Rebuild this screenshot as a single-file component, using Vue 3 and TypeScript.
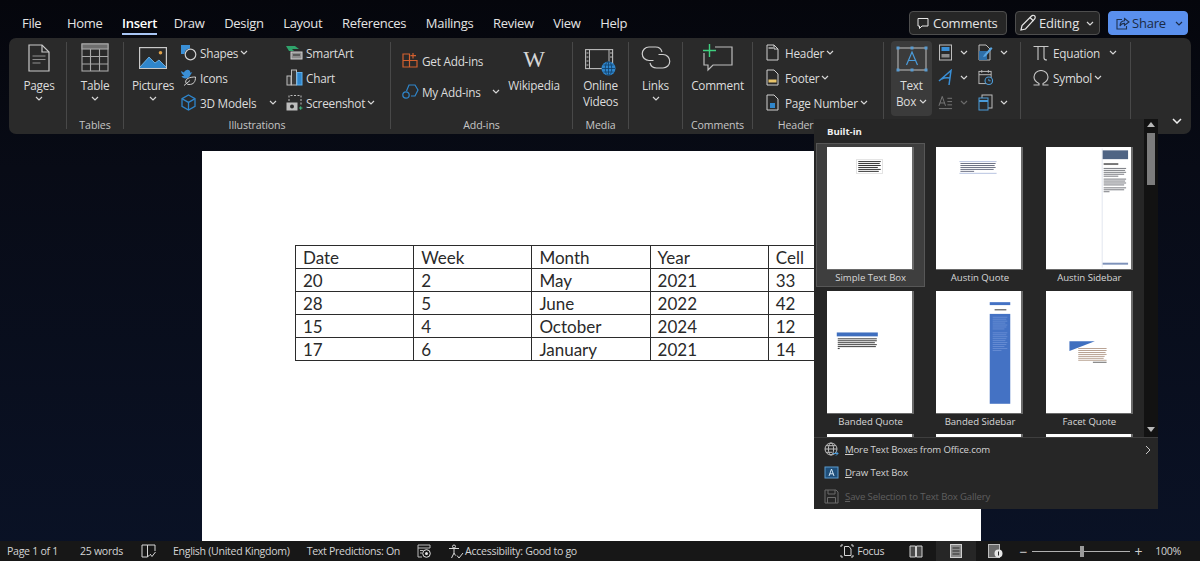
<script setup lang="ts">
interface Bar {
  x: number
  y: number
  w: number
  h: number
  fill: string
}

interface GalleryItem {
  name: string
  bars: Bar[]
  shape?: string
}

// Tiny placeholder lines inside the gallery previews
const lines = (x: number, y: number, widths: number[], fill: string, h = 1, step = 2): Bar[] =>
  widths.map((w, i) => ({ x, y: y + i * step, w, h, fill }))

const dark = '#55585f'

const gallery: GalleryItem[] = [
  {
    name: 'Simple Text Box',
    bars: [
      { x: 30, y: 11, w: 27, h: 15, fill: '#cfcfcf' },
      { x: 30.5, y: 11.5, w: 26, h: 14, fill: '#ffffff' },
      ...lines(32, 13, [23, 22, 23, 20, 23, 21], '#333333', 1),
    ],
  },
  {
    name: 'Austin Quote',
    bars: [
      { x: 24, y: 13, w: 38, h: 1, fill: '#b7c3e0' },
      { x: 24, y: 25, w: 38, h: 1, fill: '#b7c3e0' },
      ...lines(25, 15, [36, 35, 36, 34, 14], '#5a6075', 0.9),
    ],
  },
  {
    name: 'Austin Sidebar',
    bars: [
      { x: 57, y: 0, w: 1, h: 122, fill: '#e2e6ef' },
      { x: 58, y: 2, w: 26, h: 9, fill: '#4f6484' },
      { x: 59, y: 15, w: 15, h: 2, fill: '#777777' },
      ...lines(59, 20, [23, 22, 23, 21, 15], dark, 0.8),
      ...lines(59, 31, [23, 22, 23, 21], dark, 0.8),
      ...lines(59, 40, [23, 21, 6], dark, 0.8),
      { x: 58, y: 117, w: 26, h: 2, fill: '#7e92ba' },
    ],
  },
  {
    name: 'Banded Quote',
    bars: [
      { x: 10, y: 41, w: 42, h: 4, fill: '#3f6fbf' },
      ...lines(11, 47, [40, 40, 38, 40, 39, 2], '#3a3a3a', 1),
    ],
  },
  {
    name: 'Banded Sidebar',
    bars: [
      { x: 55, y: 10, w: 21, h: 3, fill: '#4472c4' },
      { x: 60, y: 17, w: 12, h: 1.5, fill: '#777777' },
      { x: 55, y: 22, w: 21, h: 92, fill: '#4472c4' },
      ...lines(58, 25, [15, 14, 15, 13, 15, 14, 12, 0, 15, 14, 15, 14, 13, 15, 14, 12, 15, 9], '#6d91d6', 0.8),
    ],
  },
  {
    name: 'Facet Quote',
    shape: '24,50 50,50 24,60',
    bars: [
      ...lines(33, 57, [29, 29, 28, 29, 27, 26, 29], '#a68a76', 0.8),
      { x: 48, y: 71, w: 14, h: 1, fill: '#666666' },
    ],
  },
  { name: '', bars: [] },
  { name: '', bars: [] },
  { name: '', bars: [] },
]

const tabs = ['Home', 'Insert', 'Draw', 'Design', 'Layout', 'References', 'Mailings', 'Review', 'View', 'Help']

const tableRows = [
  ['Date', 'Week', 'Month', 'Year', 'Cell'],
  ['20', '2', 'May', '2021', '33'],
  ['28', '5', 'June', '2022', '42'],
  ['15', '4', 'October', '2024', '12'],
  ['17', '6', 'January', '2021', '14'],
]
</script>

<template>
  <div class="word">
    <svg class="defs" aria-hidden="true">
      <symbol id="chev" viewBox="0 0 8 5">
        <polyline points="1,1 4,4 7,1" fill="none" stroke="currentColor" stroke-width="1.2" />
      </symbol>
    </svg>

    <header class="topbar">
      <nav class="tabs">
        <span class="tab file">File</span>
        <span v-for="t in tabs" :key="t" class="tab" :class="{ active: t === 'Insert' }">{{ t }}</span>
      </nav>
      <div class="actions">
        <button class="btn comments">
          <svg width="12" height="13" viewBox="0 0 12 13" fill="none" stroke="#e6e6e6"><path d="M1 1.500h10v7.500H5L2.500 11.500V9H1z" /></svg>
          Comments
        </button>
        <button class="btn editing">
          <svg width="18" height="18" viewBox="0 0 18 18" fill="none" stroke="#e6e6e6" stroke-width="1.2"><path d="M2 16l1-4.500L12.500 2a1.800 1.800 0 0 1 3.200 2.800L6.500 15z" /><path d="M11 3.500l3.500 3.500" /></svg>
          Editing
          <svg class="chev"><use href="#chev" /></svg>
        </button>
        <button class="btn share">
          <span class="share-main">
            <svg width="14" height="13" viewBox="0 0 14 13" fill="none" stroke="#20324f" stroke-width="1.1"><path d="M6 2.500H1v9.500h9.500V9" /><path d="M8.500 1.500l4.500 3.500-4.500 3.300V6.400C6 6.400 4.800 7.400 4 9c0-3 1.700-5 4.500-5.200z" /></svg>
            Share
          </span>
          <svg class="chev dark"><use href="#chev" /></svg>
        </button>
      </div>
    </header>

    <section class="ribbon">
      <div class="grp w57">
        <div class="grp-body center pages">
          <div class="big">
            <span class="big-ico">
              <svg width="22" height="28" viewBox="0 0 22 28" fill="none" stroke="#c9c9c9" stroke-width="1.2"><path d="M1 1h13l7 7v19H1z" /><path d="M14 1v7h7" /><path d="M4.500 12h13M4.500 15.500h13M4.500 19h8" stroke="#8f8f8f" /></svg>
            </span>
            <span>Pages</span>
            <svg class="chev"><use href="#chev" /></svg>
          </div>
        </div>
      </div>
      <i class="sep" />

      <div class="grp w56">
        <div class="grp-body center">
          <div class="big">
            <span class="big-ico">
              <svg width="28" height="29" viewBox="0 0 28 29" fill="none" stroke="#a8a8a8" stroke-width="1.1"><rect x="1" y="1" width="26" height="27" /><rect x="1" y="1" width="26" height="5" fill="#6e6e6e" /><path d="M1 13.500h26M1 21h26M9.500 6v22M18.500 6v22" /></svg>
            </span>
            <span>Table</span>
            <svg class="chev"><use href="#chev" /></svg>
          </div>
        </div>
        <div class="grp-label">Tables</div>
      </div>
      <i class="sep" />

      <div class="grp w266">
        <div class="grp-body illus">
          <div class="big pictures">
            <span class="big-ico">
              <svg width="28" height="22" viewBox="0 0 28 22" fill="none"><rect x="0.600" y="0.600" width="26.800" height="20.800" stroke="#c9c9c9" stroke-width="1.2" /><path d="M1 20l9-10 6 6 4-3 7 7v1H1z" fill="#2f86cc" /><path d="M1 20l9-10 6 6 4-3 7 7" stroke="#7fc0ef" stroke-width="0.800" /><circle cx="21.500" cy="5.800" r="1.800" fill="#e0a24a" /></svg>
            </span>
            <span>Pictures</span>
            <svg class="chev"><use href="#chev" /></svg>
          </div>
          <div class="col col-shapes">
            <div class="row">
              <svg class="ico" viewBox="0 0 17 17" fill="none"><path d="M1 1h9v3.500A6 6 0 0 0 4.500 10H1z" fill="#3a8fd6" /><circle cx="10.500" cy="10.500" r="5.300" stroke="#cfcfcf" stroke-width="1.200" /></svg>
              <span>Shapes</span>
              <svg class="chev"><use href="#chev" /></svg>
            </div>
            <div class="row">
              <svg class="ico" viewBox="0 0 17 17" fill="none"><path d="M1 2l3 1.500C5 1 8 0 9.500 1.500c.7.700.8 1.500.8 2.300l2-.5-1.500 2C10 8 8 9.500 5.500 9.500 3.500 9.500 2 8.500 1.500 7c1.500.3 2 0 2.500-.500C2.500 6 1.300 4 1 2z" fill="#3a8fd6" /><path d="M15.500 8c0 5-2 7.500-6.500 7.500-1.500 0-3-.8-3.300-2.500C5.400 10 9 8 15.500 8zM4 16.500l6-5" stroke="#cfcfcf" /></svg>
              <span>Icons</span>
            </div>
            <div class="row">
              <svg class="ico" viewBox="0 0 17 17" fill="none" stroke="#2f86cc" stroke-width="1.300"><path d="M8.500 1l6.500 3.700v7.600L8.500 16 2 12.300V4.700z" /><path d="M2.300 4.900l6.200 3.500 6.200-3.500M8.500 8.400V16" /></svg>
              <span>3D Models</span>
              <svg class="chev push"><use href="#chev" /></svg>
            </div>
          </div>
          <div class="col">
            <div class="row">
              <svg class="ico" viewBox="0 0 17 17" fill="none"><path d="M0 2h9l4 3H6l2 2H3z" fill="#2fa36b" /><rect x="5" y="8" width="11" height="7" fill="#8c8c8c" stroke="#d0d0d0" /><path d="M7 11h7" stroke="#2b2b2b" /></svg>
              <span>SmartArt</span>
            </div>
            <div class="row">
              <svg class="ico" viewBox="0 0 17 17" fill="none"><rect x="1" y="7" width="4" height="9" fill="#3a3a3a" stroke="#bdbdbd" /><rect x="5.500" y="1" width="5" height="15" fill="#3a3a3a" stroke="#bdbdbd" /><rect x="11" y="3.500" width="5" height="12.500" fill="#2f86cc" stroke="#5fb0ec" /></svg>
              <span>Chart</span>
            </div>
            <div class="row">
              <svg class="ico" viewBox="0 0 17 17" fill="none" stroke="#bdbdbd"><path d="M3 7V1.500h12V11" stroke-dasharray="2 1.500" /><rect x="1" y="9" width="10" height="7" fill="#bdbdbd" /><circle cx="6" cy="12.500" r="2" fill="#2b2b2b" stroke="none" /><path d="M13 14h3.500M14.700 12.300v3.500" stroke="#3fbf7f" /></svg>
              <span>Screenshot</span>
              <svg class="chev"><use href="#chev" /></svg>
            </div>
          </div>
        </div>
        <div class="grp-label">Illustrations</div>
      </div>
      <i class="sep" />

      <div class="grp w181">
        <div class="grp-body addins">
          <div class="col col-addins">
            <div class="row tall">
              <svg class="ico" viewBox="0 0 17 17" fill="none" stroke="#d2602f" stroke-width="1.200"><path d="M1 2h6.500v13H1zM1 8.500h14V15H7.500M11 1v5.500M8.500 3.700h5.500" /></svg>
              <span>Get Add-ins</span>
            </div>
            <div class="row tall">
              <svg class="ico" viewBox="0 0 17 17" fill="none" stroke="#2f86cc" stroke-width="1.200"><path d="M4.500 8l2.500-6h6l3 5-3 6H9" /><circle cx="4" cy="12" r="3.200" /></svg>
              <span>My Add-ins</span>
              <svg class="chev push"><use href="#chev" /></svg>
            </div>
          </div>
          <div class="big wiki">
            <span class="big-ico w-glyph">W</span>
            <span>Wikipedia</span>
          </div>
        </div>
        <div class="grp-label">Add-ins</div>
      </div>
      <i class="sep" />

      <div class="grp w55">
        <div class="grp-body center">
          <div class="big">
            <span class="big-ico">
              <svg class="low" width="31" height="27" viewBox="0 0 31 27" fill="none"><rect x="0.600" y="0.600" width="27" height="19" stroke="#bdbdbd" stroke-width="1.100" /><path d="M4.500 1v19M24 1v19" stroke="#bdbdbd" /><path d="M1.500 4h2M1.500 8h2M1.500 12h2M1.500 16h2M25 4h2M25 8h2" stroke="#bdbdbd" /><circle cx="23.500" cy="19.500" r="7" fill="#2f86cc" /><path d="M17 19.500h13M23.500 13v13M18.500 16h10M18.500 23h10" stroke="#123e66" stroke-width="0.800" /><ellipse cx="23.500" cy="19.500" rx="3.200" ry="7" stroke="#123e66" stroke-width="0.800" /></svg>
            </span>
            <span>Online</span>
            <span>Videos</span>
          </div>
        </div>
        <div class="grp-label">Media</div>
      </div>
      <i class="sep" />

      <div class="grp w53">
        <div class="grp-body center">
          <div class="big">
            <span class="big-ico">
              <svg width="30" height="23" viewBox="0 0 30 23" fill="none" stroke="#cfcfcf" stroke-width="1.200"><path d="M12.500 14.500H8a6.700 6.700 0 1 1 0-13.500h6.500a6.700 6.700 0 0 1 6.500 5" /><path d="M17.500 8.500H22a6.700 6.700 0 1 1 0 13.500h-6.500a6.700 6.700 0 0 1-6.500-5" /></svg>
            </span>
            <span>Links</span>
            <svg class="chev"><use href="#chev" /></svg>
          </div>
        </div>
      </div>
      <i class="sep" />

      <div class="grp w69">
        <div class="grp-body center">
          <div class="big">
            <span class="big-ico">
              <svg width="31" height="28" viewBox="0 0 31 28" fill="none"><path d="M13 3h17v18H11l-5 5v-5H2V9" stroke="#bdbdbd" stroke-width="1.200" /><path d="M7.500 0v13M1 6.500h13" stroke="#3fd07f" stroke-width="1.400" /></svg>
            </span>
            <span>Comment</span>
          </div>
        </div>
        <div class="grp-label">Comments</div>
      </div>
      <i class="sep" />

      <div class="grp w130">
        <div class="grp-body col header-col">
          <div class="row">
            <svg class="ico doc" viewBox="0 0 13 17" fill="none" stroke="#cfcfcf"><path d="M1 1h7l4 4v11H1z" /><path d="M8 1v4h4" /><rect x="2.500" y="3" width="5" height="2" fill="#8f8f8f" stroke="none" /></svg>
            <span>Header</span>
            <svg class="chev"><use href="#chev" /></svg>
          </div>
          <div class="row">
            <svg class="ico doc" viewBox="0 0 13 17" fill="none" stroke="#cfcfcf"><path d="M1 1h7l4 4v11H1z" /><rect x="2.500" y="10.500" width="8" height="3" fill="#e8c46a" stroke="none" /></svg>
            <span>Footer</span>
            <svg class="chev"><use href="#chev" /></svg>
          </div>
          <div class="row">
            <svg class="ico doc" viewBox="0 0 13 17" fill="none" stroke="#cfcfcf"><path d="M1 1h7l4 4v11H1z" /><rect x="4" y="9" width="5" height="5" fill="#2f86cc" stroke="none" /></svg>
            <span>Page Number</span>
            <svg class="chev"><use href="#chev" /></svg>
          </div>
        </div>
        <div class="grp-label">Header &amp; Footer</div>
      </div>
      <i class="sep" />

      <div class="grp w136">
        <div class="grp-body text-grp">
          <div class="big textbox">
            <span class="big-ico">
              <svg width="32" height="26" viewBox="0 0 32 26" fill="none"><rect x="2" y="2" width="28" height="22" stroke="#b5b5b5" stroke-width="1.100" /><path d="M2 2h0M30 2h0M2 24h0M30 24h0M16 2h0M16 24h0" stroke="#5a9bd0" stroke-width="3" stroke-linecap="square" /><path d="M10.500 19L16 6l5.500 13M12.500 14.500h7" stroke="#4a9bd9" stroke-width="1.200" /></svg>
            </span>
            <span>Text</span>
            <span class="inline">Box <svg class="chev"><use href="#chev" /></svg></span>
          </div>
          <div class="col col-icons">
            <div class="row">
              <svg class="ico" viewBox="0 0 14 17" fill="none"><rect x="1" y="1" width="12" height="15" stroke="#bdbdbd" /><rect x="3" y="3" width="8" height="4" fill="#3a8fd6" /><rect x="3" y="10" width="8" height="3.500" fill="#8c8c8c" /></svg>
              <svg class="chev"><use href="#chev" /></svg>
            </div>
            <div class="row">
              <svg class="ico" viewBox="0 0 14 17" fill="none" stroke="#3a8fd6" stroke-width="1.500"><path d="M0.500 12L12.500 1.500 10.500 16M3 10c3-1.500 5-1.500 8.500-1" /></svg>
              <svg class="chev"><use href="#chev" /></svg>
            </div>
            <div class="row muted">
              <svg class="ico" viewBox="0 0 16 17" fill="none" stroke="#7a7a7a"><path d="M1 12L4.500 2 8 12M2 9h5M10 4h5M10 7.500h5M10 11h5M1 15h14" /></svg>
              <svg class="chev"><use href="#chev" /></svg>
            </div>
          </div>
          <div class="col col-icons">
            <div class="row">
              <svg class="ico" viewBox="0 0 15 17" fill="none"><path d="M1 1h7l4 4v11H1z" stroke="#bdbdbd" /><path d="M1 7h8v9H1z" fill="#2f6fa8" /><path d="M6 11l7-8 1.500 1.500-7 8L5 13z" fill="#5aa5e0" /></svg>
              <svg class="chev"><use href="#chev" /></svg>
            </div>
            <div class="row">
              <svg class="ico" viewBox="0 0 16 17" fill="none" stroke="#bdbdbd"><rect x="1" y="2" width="13" height="13" /><path d="M1 5.500h13M4 0.500v3M11 0.500v3" /><circle cx="11.500" cy="12" r="4" fill="#2b2b2b" stroke="#4a9bd9" stroke-width="1.200" /><path d="M11.500 10v2h2" stroke="#4a9bd9" /></svg>
            </div>
            <div class="row">
              <svg class="ico" viewBox="0 0 15 17" fill="none"><rect x="4" y="1" width="10" height="13" stroke="#bdbdbd" /><rect x="1" y="4" width="9" height="12" fill="#2b2b2b" stroke="#4a9bd9" /><path d="M1 7h9" stroke="#4a9bd9" stroke-width="2" /></svg>
              <svg class="chev"><use href="#chev" /></svg>
            </div>
          </div>
        </div>
      </div>
      <i class="sep" />

      <div class="grp w109">
        <div class="grp-body col symbols">
          <div class="row">
            <svg class="sym" width="16" height="16" viewBox="0 0 16 16" fill="none" stroke="#c8c8c8" stroke-width="1.100"><path d="M0.500 1.500h15M5 1.500V15M11 1.500v11.500c0 1.500.8 2 3 2" /></svg>
            <span>Equation</span>
            <svg class="chev push"><use href="#chev" /></svg>
          </div>
          <div class="row">
            <svg class="sym" width="16" height="16" viewBox="0 0 16 16" fill="none" stroke="#c8c8c8" stroke-width="1.100"><path d="M0.500 15H6v-1.500C3 12 1 9.500 1 7a7 6.500 0 0 1 14 0c0 2.500-2 5-5 6.500V15h5.500" /></svg>
            <span>Symbol</span>
            <svg class="chev"><use href="#chev" /></svg>
          </div>
        </div>
      </div>
      <i class="sep" />

      <div class="collapse">
        <svg width="10" height="6" viewBox="0 0 10 6" fill="none" stroke="#f0f0f0" stroke-width="1.500"><polyline points="1,1 5,5 9,1" /></svg>
      </div>
    </section>

    <main class="canvas">
      <article class="page">
        <table class="doc-table">
          <tbody>
            <tr v-for="(r, i) in tableRows" :key="i">
              <td v-for="c in r" :key="c">{{ c }}</td>
            </tr>
          </tbody>
        </table>
      </article>
    </main>

    <footer class="status">
      <div class="st-left">
        <span class="st-page">Page 1 of 1</span>
        <span class="st-words">25 words</span>
        <svg class="st-book" width="15" height="14" viewBox="0 0 15 14" fill="none" stroke="#d8d8d8"><path d="M1 1h5.500v12H1zM6.500 1H14v6M6.500 13l2-2" /><path d="M9 10l2 2.500L14.500 8" /></svg>
        <span class="st-lang">English (United Kingdom)</span>
        <span class="st-pred">Text Predictions: On</span>
        <svg class="st-track" width="14" height="14" viewBox="0 0 14 14" fill="none" stroke="#bdbdbd"><path d="M1 1h12v3H1zM1 4v9h4" /><path d="M3 6.500h3M3 9h2" /><circle cx="9.500" cy="9.500" r="3.800" stroke="#e6e6e6" /><circle cx="9.500" cy="9.500" r="1.500" fill="#e6e6e6" stroke="none" /></svg>
        <svg class="st-access" width="16" height="15" viewBox="0 0 16 15" fill="none" stroke="#d8d8d8"><circle cx="6" cy="2.500" r="1.500" /><path d="M1 4.500h10M6 5v4M6 9l-2.500 5M6 9l1.500 2.500" /><path d="M9 11.500l2 2.500 4-5" /></svg>
        <span class="st-a11y">Accessibility: Good to go</span>
      </div>
      <div class="st-right">
        <svg width="14" height="14" viewBox="0 0 14 14" fill="none" stroke="#d8d8d8"><path d="M1 3V1h2M11 1h2v2M1 11v2h2M13 11v2h-2" /><path d="M4.500 2.500H9l2 2.500v6.500H4.500z" /></svg>
        <span class="st-focus">Focus</span>
        <svg class="st-read" width="14" height="13" viewBox="0 0 14 13" fill="#4a4a4a" stroke="#d0d0d0"><path d="M1 1h5.500v11H1zM7.500 1H13v11H7.500z" /></svg>
        <span class="st-print">
          <svg width="12" height="14" viewBox="0 0 12 14" fill="#8a8a8a" stroke="#d0d0d0"><rect x="0.500" y="0.500" width="11" height="13" /><path d="M2.500 4h7M2.500 7h7M2.500 10h7" stroke="#2a2a2a" /></svg>
        </span>
        <svg class="st-web" width="15" height="14" viewBox="0 0 15 14" fill="none" stroke="#bdbdbd"><rect x="0.500" y="0.500" width="11" height="13" fill="#6b6b6b" /><circle cx="10.500" cy="9.500" r="4" fill="#e6e6e6" stroke="none" /><path d="M10.500 7.500v4" stroke="#222" /></svg>
        <span class="st-zoom">
          <span class="zoom-sign">−</span>
          <span class="zoom-track"><span class="zoom-thumb" /></span>
          <span class="zoom-sign">+</span>
        </span>
        <span class="st-pct">100%</span>
      </div>
    </footer>

    <!-- Text Box dropdown, opened over the ribbon and the page -->
    <aside class="menu">
      <div class="menu-top">
        <div class="menu-gallery">
          <div class="menu-title">Built-in</div>
          <div class="thumbs">
            <div
              v-for="(item, i) in gallery"
              :key="i"
              class="thumb-item"
              :class="{ selected: i === 0 }"
            >
              <svg class="thumb" viewBox="0 0 87 122">
                <polygon v-if="item.shape" :points="item.shape" fill="#3f6fbf" />
                <rect
                  v-for="(b, j) in item.bars"
                  :key="j"
                  :x="b.x"
                  :y="b.y"
                  :width="b.w"
                  :height="b.h"
                  :fill="b.fill"
                />
              </svg>
              <span class="thumb-name">{{ item.name }}</span>
            </div>
          </div>
        </div>
        <div class="scroll">
          <span class="tri up" />
          <span class="scroll-thumb" />
          <span class="tri down" />
        </div>
      </div>
      <div class="menu-rows">
        <div class="menu-row">
          <svg width="15" height="15" viewBox="0 0 15 15" fill="none" stroke="#bdbdbd"><circle cx="7" cy="7" r="6" /><ellipse cx="7" cy="7" rx="2.600" ry="6" /><path d="M1 7h12M2 3.700h10M2 10.300h6" /><path d="M9 11.500h5M12 9.500l2 2-2 2" stroke="#4a9bd9" /></svg>
          <span><u>M</u>ore Text Boxes from Office.com</span>
          <svg class="caret" width="6" height="10" viewBox="0 0 6 10" fill="none" stroke="#c8c8c8"><polyline points="1,1 5,5 1,9" /></svg>
        </div>
        <div class="menu-row">
          <svg width="15" height="15" viewBox="0 0 15 15" fill="none"><rect x="1" y="2" width="13" height="11" fill="#1f4f7a" stroke="#5a9bd0" /><path d="M5 11l2.500-7L10 11M5.800 8.800h3.400" stroke="#cfe4f5" /></svg>
          <span><u>D</u>raw Text Box</span>
        </div>
        <div class="menu-row disabled">
          <svg width="15" height="15" viewBox="0 0 15 15" fill="none" stroke="#6a6a6a"><path d="M1 1h11l2 2v11H1z" /><path d="M4 1v4h7V1M3.500 14V8.500h8V14" /></svg>
          <span><u>S</u>ave Selection to Text Box Gallery</span>
        </div>
      </div>
    </aside>
  </div>
</template>

<style>
html,
body {
  margin: 0;
  background: #0a0f1e;
}
</style>

<style scoped>
.word {
  position: relative;
  width: 1200px;
  height: 561px;
  overflow: hidden;
  display: flex;
  flex-direction: column;
  background: linear-gradient(180deg, #05060c 0%, #080b16 30%, #0a1226 100%);
  font-family: 'Open Sans', 'Noto Sans', sans-serif;
  color: #e2e2e2;
}

.defs {
  display: none;
}

.chev {
  width: 8px;
  height: 5px;
  flex: none;
  color: #d6d6d6;
}

.chev.dark {
  color: #1c2c48;
}

/* top bar */
.topbar {
  height: 38px;
  flex: none;
  display: flex;
  justify-content: space-between;
}

.tabs {
  display: flex;
  gap: 19.6px;
  padding: 14px 0 0 22px;
  font-size: 13px;
  letter-spacing: -0.3px;
  color: #e4e4e4;
}

.tab {
  height: 19px;
  line-height: 19px;
}

.tab.file {
  margin-right: 6px;
}

.tab.active {
  margin-right: -3px;
  font-weight: 600;
  color: #fff;
  border-bottom: 2px solid #a9c6f5;
  box-sizing: border-box;
  height: 21px;
}

.actions {
  display: flex;
  gap: 8px;
  padding: 11px 12px 0 0;
}

.btn {
  height: 24px;
  box-sizing: border-box;
  display: flex;
  align-items: center;
  border: 1px solid #4e4e4e;
  border-radius: 4px;
  background: #262626;
  color: #e4e4e4;
  font: inherit;
  font-size: 13px;
  letter-spacing: -0.2px;
  padding: 0;
}

.comments {
  width: 98px;
  padding-left: 7px;
  gap: 4px;
}

.editing {
  width: 85px;
  padding-left: 3px;
  gap: 2px;
}

.editing .chev {
  margin-left: 5px;
}

.share {
  width: 80px;
  background: #5a90ee;
  border-color: #5a90ee;
  color: #1b2a44;
  padding-left: 7px;
}

.share-main {
  display: flex;
  align-items: center;
  gap: 2px;
}

.share .chev {
  margin-left: 9px;
}

/* ribbon */
.ribbon {
  height: 96px;
  flex: none;
  margin: 0 9px;
  box-sizing: border-box;
  display: flex;
  background: #2a2a2a;
  border-radius: 7px;
  font-size: 11.8px;
  letter-spacing: -0.25px;
  color: #dcdcdc;
}

.sep {
  width: 1px;
  flex: none;
  height: 87px;
  margin-top: 4px;
  background: #484848;
}

.grp {
  flex: none;
  display: flex;
  flex-direction: column;
}

.w57 { width: 57px; }
.w56 { width: 56px; }
.w266 { width: 266px; }
.w181 { width: 181px; }
.w55 { width: 55px; }
.w53 { width: 53px; }
.w69 { width: 69px; }
.w130 { width: 130px; }
.w136 { width: 136px; }
.w109 { width: 109px; }

.grp-body {
  height: 78px;
  display: flex;
}

.grp-body.center {
  justify-content: center;
}

.grp-body.pages {
  padding-left: 3px;
}

.grp-label {
  height: 18px;
  line-height: 18px;
  text-align: center;
  font-size: 10.6px;
  letter-spacing: -0.1px;
  color: #c6c6c6;
  white-space: nowrap;
}

.big {
  display: flex;
  flex-direction: column;
  align-items: center;
  line-height: 16px;
  white-space: nowrap;
}

.big .chev {
  margin-top: 3px;
}

.big-ico {
  height: 39px;
  display: flex;
  align-items: center;
  justify-content: center;
  flex: none;
}

.low {
  margin-top: 10px;
}

.col {
  display: flex;
  flex-direction: column;
  padding-top: 2px;
}

.row {
  height: 25px;
  display: flex;
  align-items: center;
  gap: 3px;
  white-space: nowrap;
}

.row.tall {
  height: 31px;
}

.row .chev {
  margin-left: -1px;
}

.ico {
  width: 17px;
  height: 17px;
  flex: none;
}

.ico.doc {
  width: 13px;
}

.illus .pictures {
  width: 40px;
  margin-left: 9px;
}

.col-shapes {
  width: 106px;
  margin-left: 7px;
}

.row .push {
  margin-left: auto;
}

.col-shapes .push {
  margin-right: 9px;
}

.addins {
  padding-left: 11px;
}

.col-addins {
  width: 98px;
  padding-top: 7px;
}

.wiki {
  width: 52px;
  padding-left: 8px;
}

.w-glyph {
  font-family: 'Liberation Serif', serif;
  font-size: 23px;
  color: #d6d6d6;
  padding-top: 5px;
  box-sizing: border-box;
}

.header-col {
  padding-left: 13px;
}

.header-col .row {
  gap: 6px;
}

.header-col .chev {
  margin-left: -4px;
}

.text-grp {
  padding-left: 7px;
}

.textbox {
  width: 41px;
  height: 75px;
  margin-top: 3px;
  background: #3b3b3b;
  border-radius: 4px;
}

.textbox .big-ico {
  height: 36px;
}

.inline {
  display: flex;
  align-items: center;
  gap: 3px;
}

.inline .chev {
  margin-top: 0;
}

.col-icons {
  width: 40px;
  margin-left: 6px;
}

.text-grp .col-icons:last-child {
  margin-left: 0;
}

.col-icons .ico {
  width: 15px;
}

.col-icons .chev {
  margin-left: 4px;
}

.muted .chev {
  color: #6a6a6a;
}

.symbols {
  padding: 2px 13px 0 12px;
  box-sizing: border-box;
}

.sym {
  flex: none;
  margin-right: 1px;
}

.collapse {
  flex: 1;
  display: flex;
  align-items: flex-end;
  justify-content: flex-end;
  padding: 0 9px 10px 0;
}

/* document */
.canvas {
  flex: 1;
  min-height: 0;
  padding: 17px 0 0 202px;
  overflow: hidden;
}

.page {
  width: 779px;
  height: 390px;
  box-sizing: border-box;
  padding: 94px 0 0 93px;
  background: #fff;
}

.doc-table {
  width: 592px;
  table-layout: fixed;
  border-collapse: collapse;
  font-family: Lato, 'Open Sans', sans-serif;
  font-size: 17px;
  color: #2a2a2a;
}

.doc-table td {
  height: 23px;
  padding: 1px 0 0 7px;
  box-sizing: border-box;
  border: 1px solid #2b2b2b;
  line-height: 20px;
}

/* status bar */
.status {
  height: 20px;
  flex: none;
  display: flex;
  justify-content: space-between;
  background: #171717;
  font-size: 10.6px;
  letter-spacing: -0.3px;
  color: #d4d4d4;
}

.st-left,
.st-right {
  display: flex;
  align-items: center;
  white-space: nowrap;
}

.st-page { margin-left: 7px; }
.st-words { margin-left: 22px; }
.st-book { margin-left: 18px; }
.st-lang { margin-left: 17px; }
.st-pred { margin-left: 17px; }
.st-track { margin-left: 17px; }
.st-access { margin-left: 17px; }
.st-a11y { margin-left: 1px; }
.st-focus { margin-left: 3px; }
.st-read { margin-left: 25px; }

.st-print {
  width: 40px;
  height: 20px;
  margin-left: 13px;
  display: flex;
  align-items: center;
  justify-content: center;
  background: #262626;
}

.st-web { margin-left: 12px; }

.st-zoom {
  display: flex;
  align-items: center;
  margin-left: 14px;
}

.zoom-sign {
  width: 12px;
  text-align: center;
  font-size: 14px;
  color: #cfcfcf;
}

.zoom-track {
  width: 98px;
  height: 1px;
  margin: 0 2px 0 3px;
  background: #b0b0b0;
  display: flex;
  align-items: center;
  padding-left: 48px;
  box-sizing: border-box;
}

.zoom-thumb {
  width: 4px;
  height: 11px;
  background: #9a9a9a;
}

.st-pct {
  margin: 0 19px 0 11px;
}

/* dropdown */
.menu {
  position: absolute;
  left: 814px;
  top: 119px;
  width: 344px;
  height: 390px;
  display: flex;
  flex-direction: column;
  background: #262626;
  font-size: 9.6px;
  letter-spacing: -0.03px;
  color: #d6d6d6;
}

.menu-top {
  height: 318px;
  flex: none;
  display: flex;
}

.menu-gallery {
  width: 330px;
  overflow: hidden;
  flex: none;
  box-sizing: border-box;
  padding-left: 2px;
}

.menu-title {
  height: 24px;
  line-height: 26px;
  padding-left: 11px;
  font-weight: 700;
  font-size: 9.6px;
  color: #f0f0f0;
}

.thumbs {
  display: grid;
  grid-template-columns: repeat(3, 1fr);
  grid-auto-rows: 143.5px;
}

.thumb-item {
  box-sizing: border-box;
  display: flex;
  flex-direction: column;
  align-items: center;
  padding-top: 3px;
  border: 1px solid transparent;
  height: 144px;
}

.thumb-item.selected {
  background: #3e3e3e;
  border-color: #575757;
}

.thumb {
  width: 87px;
  height: 123px;
  flex: none;
  background: #fff;
  border-right: 2px solid #6a6a6a;
  border-bottom: 1px solid #6a6a6a;
  box-sizing: border-box;
}

.thumb-name {
  line-height: 16px;
  white-space: nowrap;
}

.scroll {
  width: 14px;
  flex: none;
  background: #121212;
  display: flex;
  flex-direction: column;
  align-items: center;
  padding: 3px 0 5px;
  box-sizing: border-box;
}

.tri {
  width: 0;
  height: 0;
  border-left: 4.5px solid transparent;
  border-right: 4.5px solid transparent;
}

.tri.up {
  border-bottom: 5px solid #b8b8b8;
}

.tri.down {
  margin-top: auto;
  border-top: 5px solid #b8b8b8;
}

.scroll-thumb {
  width: 8px;
  height: 52px;
  margin-top: 6px;
  background: #7c7c7c;
}

.menu-rows {
  flex: 1;
  border-top: 1px solid #3e3e3e;
  display: flex;
  flex-direction: column;
}

.menu-row {
  height: 23.3px;
  display: flex;
  align-items: center;
  gap: 6px;
  padding: 0 7px 0 10px;
  font-size: 9.6px;
  letter-spacing: -0.15px;
  color: #d2d2d2;
}

.caret {
  margin-left: auto;
}

.menu-row.disabled {
  color: #5f5f5f;
}
</style>
